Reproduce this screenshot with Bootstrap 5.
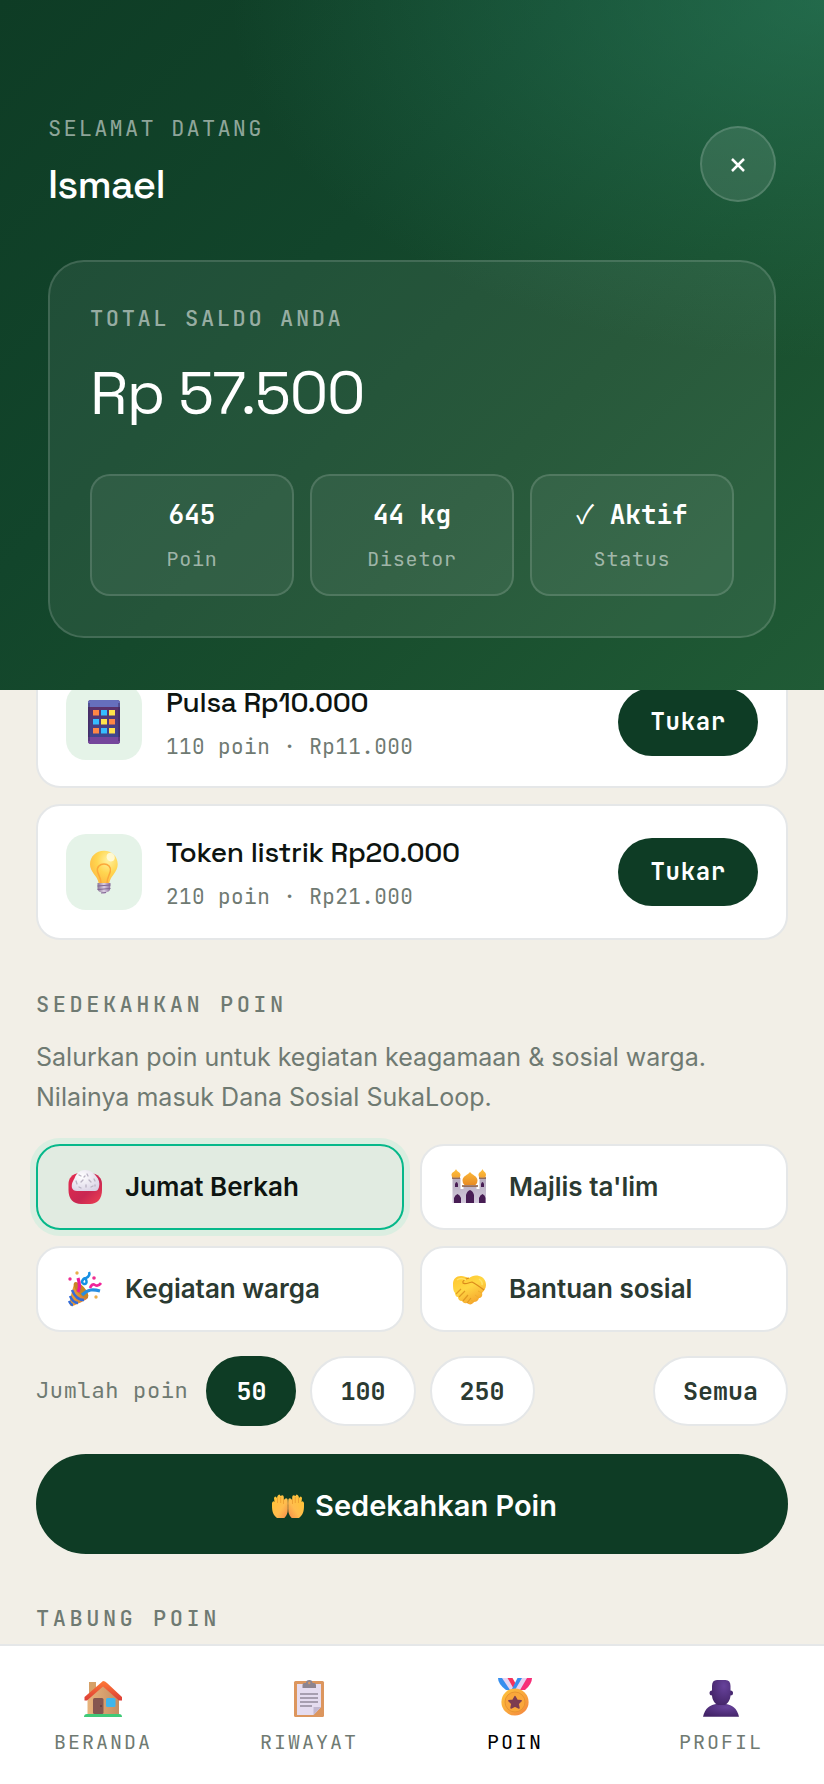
<!DOCTYPE html>
<html lang="id">
<head>
<meta charset="utf-8">
<meta name="viewport" content="width=device-width, initial-scale=1">
<title>SukaLoop – Poin</title>
<link rel="stylesheet" href="https://cdn.jsdelivr.net/npm/bootstrap@5.3.0/dist/css/bootstrap.min.css">
<style>
:root{--forest:#0e3c25;--muted:#6f7a72;--line:#e5e7e8;--cream:#f2efe7;--mono:"JetBrains Mono","DejaVu Sans Mono",monospace;--display:"Space Grotesk",Inter,sans-serif}
body{background:var(--cream);font-family:Inter,"Liberation Sans",sans-serif;color:#0d1410}
button{border:0}
svg{display:block;flex:none}
.mono{font-family:var(--mono)}
.hero{padding:112px 48px 52px;color:#fff;background:radial-gradient(ellipse 72% 52% at 100% 0,rgba(45,132,100,.55),rgba(45,132,100,0)),linear-gradient(135deg,#0e3c25 0%,#12452b 38%,#184d2d 64%,#205b36 100%)}
.overline{font:400 22px/34px var(--mono);letter-spacing:.1em;color:rgba(255,255,255,.55)}
.balance .overline{letter-spacing:.12em;font-weight:500}
.user-name{font:500 40px/58px var(--display);letter-spacing:-.02em;margin:10px 0 2px}
.close-btn{width:76px;height:76px;color:#fff;background:rgba(255,255,255,.1);border:2px solid rgba(255,255,255,.15)}
.balance{margin-top:44px;padding:40px;border:2px solid rgba(255,255,255,.14);border-radius:36px;background:rgba(255,255,255,.07)}
.amount{font:400 60px/74px var(--display);letter-spacing:-.02em;margin:20px 0 44px}
.stats{gap:16px}
.stat{flex:1 1 0;padding:20px 8px;border:2px solid rgba(255,255,255,.14);border-radius:20px;background:rgba(255,255,255,.06)}
.stat b{display:block;font:700 26px/38px var(--mono)}
.stat b i{font-family:"Noto Sans CJK JP",sans-serif;font-style:normal;font-weight:400;line-height:1}
.stat span{display:block;margin-top:10px;font-size:20px;line-height:30px;letter-spacing:.04em;color:rgba(255,255,255,.55)}
.content{padding:0 36px 8px;overflow:hidden}
.rewards{gap:16px;margin-top:-36px}
.reward{gap:24px;height:134px;padding:28px 28px 26px;background:#fff;border:2px solid var(--line);border-radius:24px}
.reward:last-child{height:136px;padding-bottom:28px}
.tile{width:76px;height:76px;border-radius:20px;background:#e5f3e8}
.reward h2{font:500 28px/38px var(--display);letter-spacing:-.01em;margin:0 0 12px}
.reward p{font-size:21px;line-height:28px;letter-spacing:.02em;color:var(--muted);margin:0}
.redeem{height:68px;padding:0 32px;background:var(--forest);color:#fff;font:700 24px/32px var(--mono);letter-spacing:.03em}
.section-label{font:500 22px/34px var(--mono);letter-spacing:.16em;color:var(--muted);margin:48px 0 0}
.lead-in{font-size:25px;line-height:40px;color:var(--muted);margin:15px 0 27px}
.choices{display:grid;grid-template-columns:1fr 1fr;gap:16px}
.choice{gap:23px;height:86px;padding:0 28px;background:#fff;border:2px solid var(--line);border-radius:24px;font-size:26px;line-height:36px;font-weight:600;color:#2b3a31}
.choice.active{background:#e1ebe1;border-color:#06b88a;color:#0d1410;box-shadow:0 0 0 6px #dbeee1}
.amounts{gap:14px;margin:24px 0 28px}
.amounts .hint{font-size:22px;line-height:32px;letter-spacing:.03em;color:var(--muted);margin-right:4px}
.pill{height:70px;padding:0 28px;background:#fff;border:2px solid var(--line);font:700 25px/32px var(--mono);color:#2b3a31}
.pill.active{background:var(--forest);border-color:var(--forest);color:#fff}
.donate{gap:10px;height:100px;padding:4px 0 0;background:var(--forest);color:#fff;font-size:29px;line-height:40px;font-weight:600}
.tabs{border-top:2px solid var(--line);background:#fff;padding:32px 0 28px}
.tabs a{gap:10px;flex:1 1 0;font:400 20px/28px var(--mono);letter-spacing:.1em;color:var(--muted);text-decoration:none}
.tabs a.active{color:#000}
</style>
</head>
<body>
<div class="d-flex flex-column min-vh-100">
<header class="hero">
  <div class="d-flex justify-content-between align-items-center">
    <div><div class="overline">SELAMAT DATANG</div><h1 class="user-name">Ismael</h1></div>
    <button class="close-btn rounded-circle d-flex align-items-center justify-content-center" aria-label="Tutup">
      <svg width="16" height="18" viewBox="0 0 16 18" stroke="#fff" stroke-width="2.5"><path d="M2 4l12 12M14 4L2 16"/></svg>
    </button>
  </div>
  <section class="balance">
    <div class="overline">TOTAL SALDO ANDA</div>
    <div class="amount">Rp 57.500</div>
    <div class="stats d-flex text-center mono">
      <div class="stat"><b>645</b><span>Poin</span></div>
      <div class="stat"><b>44 kg</b><span>Disetor</span></div>
      <div class="stat"><b><i>✓</i> Aktif</b><span>Status</span></div>
    </div>
  </section>
</header>

<main class="content flex-grow-1">
  <div class="rewards d-flex flex-column">
    <article class="reward d-flex align-items-center">
      <div class="tile d-flex align-items-center justify-content-center">
        <svg width="44" height="44" viewBox="0 0 44 44"><defs><linearGradient id="ph" x2="0" y2="1"><stop stop-color="#5c3068"/><stop offset="1" stop-color="#3d4690"/></linearGradient></defs>
          <rect x="6" width="32" height="44" rx="3" fill="#50306f"/><path d="M7 7h30v30H7z" fill="url(#ph)"/><path d="M6 7V3q0-3 3-3h26q3 0 3 3v4z" fill="#666fbd"/><path d="M6 37h32v4q0 3-3 3H9q-3 0-3-3z" fill="#75469c"/><path d="M7 3v38M37 3v38" stroke="#3b2c61" stroke-opacity=".6" stroke-width="1.5"/>
          <g fill="#ff8745"><path d="M11 10h6v5.500h-6zM27 19h6v5.500h-6zM11 28h6v5.500h-6z"/></g><g fill="#35bcff"><path d="M19 10h6v5.500h-6zM11 19h6v5.500h-6zM19 28h6v5.500h-6z"/></g><g fill="#ffe34b"><path d="M27 10h6v5.500h-6zM19 19h6v5.500h-6zM27 28h6v5.500h-6z"/></g></svg>
      </div>
      <div class="flex-grow-1"><h2>Pulsa Rp10.000</h2><p class="mono">110 poin · Rp11.000</p></div>
      <button class="redeem rounded-pill">Tukar</button>
    </article>
    <article class="reward d-flex align-items-center">
      <div class="tile d-flex align-items-center justify-content-center">
        <svg width="44" height="44" viewBox="0 0 44 44"><defs><radialGradient id="bu" cx=".65" cy=".3" r=".8"><stop stop-color="#fff2a0"/><stop offset=".5" stop-color="#ffd650"/><stop offset="1" stop-color="#fdb741"/></radialGradient><linearGradient id="bs"><stop stop-color="#8b7896"/><stop offset=".5" stop-color="#dccfe4"/><stop offset="1" stop-color="#8a6c9b"/></linearGradient></defs>
          <path d="M22 .7C14 .7 8 6.500 8 14.300c0 8 7.500 11.500 8.700 18.700h10.600c1.200-7.200 8.400-10.700 8.400-18.700C35.700 6.500 30 .7 22 .7z" fill="url(#bu)"/><path d="M19 33c0-5-2.700-8-3.500-11.500C14.500 17 18 14 22 14s7.300 3 6.300 7.500C27.500 25 25 28 25 33" fill="none" stroke="#fca83a" stroke-width="1.500"/><ellipse cx="28.500" cy="7.500" rx="4" ry="4.500" fill="#fffbe0" opacity=".85" transform="rotate(-30 28 7)"/><path d="M15.500 33h13l-.5 7q-1 2-3.500 2.300Q22 45.500 19.500 42.300 16 42 15.500 39z" fill="url(#bs)"/><path d="M15.500 36l13-1M15.500 39.500l13-1M19 43l5-.5" stroke="#816793" stroke-width="1.200"/></svg>
      </div>
      <div class="flex-grow-1"><h2>Token listrik Rp20.000</h2><p class="mono">210 poin · Rp21.000</p></div>
      <button class="redeem rounded-pill">Tukar</button>
    </article>
  </div>

  <h3 class="section-label">SEDEKAHKAN POIN</h3>
  <p class="lead-in">Salurkan poin untuk kegiatan keagamaan &amp; sosial warga. Nilainya masuk Dana Sosial SukaLoop.</p>

  <div class="choices">
    <button class="choice active d-flex align-items-center" aria-pressed="true">
      <svg width="36" height="36" viewBox="0 0 36 36"><defs><linearGradient id="bo" x2="1" y2="1"><stop stop-color="#e52c4e"/><stop offset=".6" stop-color="#c92752"/><stop offset="1" stop-color="#f04052"/></linearGradient><radialGradient id="ri" cx=".35" cy=".3" r=".8"><stop stop-color="#fff"/><stop offset="1" stop-color="#d9d2e5"/></radialGradient></defs>
        <path d="M2.500 15C2.500 9 6 5 13 4h12c7 1 11 5 11 11v6c0 9-5 14-12 14h-9C7.500 35 2.500 30 2.500 21z" fill="url(#bo)"/><path d="M6 19C5 14 8 11 9 8c2-4 5-7 10-7s9 3 11 6c3 3 4 7 3 11-1 3-2 4-4 4H11c-3 0-4-1-5-3z" fill="url(#ri)"/><g stroke="#b9b2c2" stroke-width="1.300" stroke-linecap="round"><path d="M13 6l2 1M21 5l1 2M10 12l1 3M17 11l-2 2M23 11l2 2M28 10l1 2M13 18l2 1M20 16v2M25 18l2-1M29 16v1M18 8l1-1"/></g></svg>
      Jumat Berkah
    </button>
    <button class="choice d-flex align-items-center" aria-pressed="false">
      <svg width="36" height="36" viewBox="0 0 36 36"><defs><linearGradient id="go" x2="0" y2="1"><stop stop-color="#ffc13d"/><stop offset="1" stop-color="#e88b24"/></linearGradient><linearGradient id="wa" x2="0" y2="1"><stop stop-color="#b4aabd"/><stop offset="1" stop-color="#d3c9dc"/></linearGradient></defs>
        <path d="M2.500 34V9h8v11h3v-3h13v3h3V9h7v25z" fill="url(#wa)"/><path d="M2 9h8M29 9h7M12 17h16" stroke="#85553d" stroke-width="1.600"/><path d="M6 0c1 3 4.500 3 4.500 6q0 2.500-2 2.500h-5q-2 0-2-2.500c0-3 3.500-3 4.500-6zM32.500 0c1 3 3.500 3 3.500 6q0 2.500-2 2.500h-3.500q-2 0-2-2.500c0-3 3-3 4-6zM20 3c2 3 7.500 4 7.500 8.500q0 3.500-2 4.500h-11q-2-1-2-4.500C12.500 7 18 6 20 3z" fill="url(#go)"/><path d="M16 34v-8q1-4 4-5 3 1 4 5v8zM4 34v-5q1-3 3.500-4 2.500 1 3.500 4v5zM29 34v-5q1-3 3.500-4 2.500 1 3 4v5zM5 18v-3q1.500-4 3 0v3zM31 18v-3q1.500-4 3 0v3z" fill="#481d54"/></svg>
      Majlis ta'lim
    </button>
    <button class="choice d-flex align-items-center" aria-pressed="false">
      <svg width="36" height="36" viewBox="0 0 36 36"><defs><linearGradient id="co"><stop stop-color="#efa22f"/><stop offset="1" stop-color="#ce773b"/></linearGradient></defs>
        <path d="M8 13c-2 8-5 17-4 21 1 2 3 1 5 0 5-2 11-5 13-7 1-5-9-16-14-14z" fill="url(#co)"/><path d="M6 19q4 10 12 10M4 25q3 7 8 7M3 30q2 4 4 4" fill="none" stroke="#346cd8" stroke-width="2.500"/><ellipse cx="15" cy="19" rx="4" ry="10" transform="rotate(-42 15 19)" fill="#c78425"/><path d="M12 21c2-4 2-8 0-14" fill="none" stroke="#ed1b99" stroke-width="3.200"/><path d="M16 24c6-6 11-6 18-4" fill="none" stroke="#278de1" stroke-width="3.200"/><path d="M17 8c4-2 5 6 1 5-4-1-1-6 2-6 3-1 4-4 3-6" fill="none" stroke="#1690e3" stroke-width="2.500"/><path d="M24 17q2-5 5-3t6-2" fill="none" stroke="#f0249a" stroke-width="2.700"/><g fill="#eaae4b"><circle cx="11" cy="2" r="1.700"/><circle cx="30" cy="26" r="1.700"/></g><g fill="#ed2e92"><circle cx="4" cy="8" r="1.700"/><circle cx="28" cy="7" r="1.800"/></g></svg>
      Kegiatan warga
    </button>
    <button class="choice d-flex align-items-center" aria-pressed="false">
      <svg width="36" height="36" viewBox="0 0 36 36"><defs><linearGradient id="ha" x2=".6" y2="1"><stop stop-color="#ffc52d"/><stop offset=".5" stop-color="#ffd743"/><stop offset="1" stop-color="#f5a52d"/></linearGradient></defs>
        <path d="M3 13C3 8 6 5 11 5c3 0 5 1 8 2 3-2 6-3 10-2 5 1 7 5 7 9 0 3-2 6-4 8 1 3-1 5-3 5-1 3-3 4-5 4-2 3-5 3-7 1-3 1-4-1-5-2-3 0-4-2-4-4-2 0-3-2-3-4-2-2-2-6-2-9z" fill="url(#ha)"/><path d="M19 7c-4 1-7 3-6 5 2 2 7-1 9-1 4 2 8 5 12 8" fill="none" stroke="#db8b1c" stroke-width="1.200"/><path d="M6 23l5-5M9 26l6-6M13 30l5-6M17 32l4-5" fill="none" stroke="#e09a22" stroke-width="1.200"/><path d="M32 22l-4-2M29 27l-4-3M24 31l-3-2" fill="none" stroke="#f0ae2c" stroke-width="1"/><path d="M7 9q4-3 9 0M29 8q4 3 3 6" fill="none" stroke="#ffe268" stroke-width="1.500"/></svg>
      Bantuan sosial
    </button>
  </div>

  <div class="amounts d-flex align-items-center">
    <span class="hint mono">Jumlah poin</span>
    <button class="pill active rounded-pill" aria-pressed="true">50</button>
    <button class="pill rounded-pill" aria-pressed="false">100</button>
    <button class="pill rounded-pill" aria-pressed="false">250</button>
    <button class="pill rounded-pill ms-auto" aria-pressed="false">Semua</button>
  </div>

  <button class="donate rounded-pill w-100 d-flex align-items-center justify-content-center">
    <svg width="38" height="24" viewBox="-4 0 38 24"><defs><linearGradient id="pa" x2="1" y2="1"><stop stop-color="#ffc52f"/><stop offset=".6" stop-color="#ffbd4e"/><stop offset="1" stop-color="#f58b49"/></linearGradient><path id="palm" d="M6 24C2 21 1 17 1 12V9q1-3 2.500-1L3 4q1-3 3 0l.5-2q2-3 3 0l1-.5q2-1 2.300 1.500V6q2-3 3.700-1 .5 2 .3 6v4q0 6-3.500 9z"/></defs>
      <use href="#palm" fill="url(#pa)"/><use href="#palm" fill="url(#pa)" transform="matrix(-1 0 0 1 34 0)"/><path d="M6.500 4v5M9.700 3v6M12.500 5v5M27.500 4v5M24.300 3v6M21.500 5v5" stroke="#e99a31" stroke-width=".8"/></svg>
    <span>Sedekahkan Poin</span>
  </button>

  <h3 class="section-label">TABUNG POIN</h3>
</main>

<nav class="tabs d-flex" aria-label="Navigasi utama">
  <a href="#beranda" class="d-flex flex-column align-items-center">
    <svg width="40" height="40" viewBox="0 0 40 40"><defs><linearGradient id="hw"><stop stop-color="#e8b47c"/><stop offset="1" stop-color="#c58d62"/></linearGradient><linearGradient id="hr" x2="0" y2="1"><stop stop-color="#ff7a35"/><stop offset="1" stop-color="#dc3c37"/></linearGradient></defs>
      <path d="M6 4h7v12H6z" fill="#d6a168"/><path d="M4.500 21L20 7l16 14v15h-31.500z" fill="url(#hw)"/><path d="M20 3L1.500 19v3.500H4L20 8.500l16 14h3V19L24 5q-2-2-4-2z" fill="url(#hr)"/><rect x="10" y="20" width="10.500" height="16" rx="1.500" fill="#855650"/><circle cx="18" cy="28" r=".8" fill="#4e2c2b"/><rect x="23" y="20" width="9.500" height="9" rx="1.500" fill="#3eb6ed"/><path d="M1 39q0-3 3-3h32q3 0 3 3z" fill="#3fca78"/></svg>
    BERANDA</a>
  <a href="#riwayat" class="d-flex flex-column align-items-center">
    <svg width="40" height="40" viewBox="0 0 40 40"><rect x="5" y="3" width="30" height="36" rx="1.500" fill="#dc965e"/><path d="M8 6h24v23l-7.500 8H8z" fill="#e5dcf0"/><path d="M24.500 29H32l-7.500 8z" fill="#c2b7d0"/><path d="M13.500 10V7q0-2 2-2H17q0-3 3.300-3t3.200 3H25q2 0 2 2v3z" fill="#8d8490"/><circle cx="20.200" cy="5" r="1.200" fill="#d69662"/><path d="M11 16h18M11 20h18M11 24h18M11 28h12" stroke="#a79eb0" stroke-width="1.800"/></svg>
    RIWAYAT</a>
  <a href="#poin" class="active d-flex flex-column align-items-center" aria-current="page">
    <svg width="40" height="40" viewBox="0 0 40 40"><defs><linearGradient id="me" x2="1" y2="1"><stop stop-color="#ffc53c"/><stop offset=".5" stop-color="#f9a83d"/><stop offset="1" stop-color="#f48340"/></linearGradient></defs>
      <path d="M3 0h6l8 12h-6Q3 6 3 0z" fill="#378fee"/><path d="M7 0h6l8 12h-6z" fill="#e6d4f2"/><path d="M12.500 0h5L22 8l-2 5z" fill="#f6325c"/><path d="M27.500 0h-5L16.500 12h6z" fill="#378fee"/><path d="M33 0h-6l-7 12h6z" fill="#e6d4f2"/><path d="M37 0h-5l-7 12h5Q37 6 37 0z" fill="#f72e78"/><circle cx="20" cy="24" r="13.600" fill="url(#me)"/><circle cx="20" cy="24" r="10" fill="#faa73b" stroke="#e9952f" stroke-width="1"/><path d="M20 18.500l2 3.700 4.200.6-3 3 .8 4.200-4-2-4 2 .8-4.200-3-3 4.200-.6z" fill="#7d3c50" stroke="#7d3c50" stroke-width="1.400" stroke-linejoin="round"/></svg>
    POIN</a>
  <a href="#profil" class="d-flex flex-column align-items-center">
    <svg width="40" height="40" viewBox="0 0 40 40"><defs><radialGradient id="pr" cx=".65" cy=".25" r=".8"><stop stop-color="#67429b"/><stop offset="1" stop-color="#432468"/></radialGradient></defs>
      <path d="M2 38.700C4 30 9 27 15 26h10c6 1 11 4 13 12.700z" fill="url(#pr)"/><circle cx="11" cy="15" r="2.500" fill="#47286f"/><circle cx="29.500" cy="15" r="2.500" fill="#47286f"/><path d="M11 8q0-6 5-6h8.500q5 0 5 6v9c0 5-3 9-6 10h-6.500c-3-1-6-5-6-10z" fill="url(#pr)"/></svg>
    PROFIL</a>
</nav>
</div>
<script src="https://cdn.jsdelivr.net/npm/bootstrap@5.3.0/dist/js/bootstrap.bundle.min.js"></script>
</body>
</html>
